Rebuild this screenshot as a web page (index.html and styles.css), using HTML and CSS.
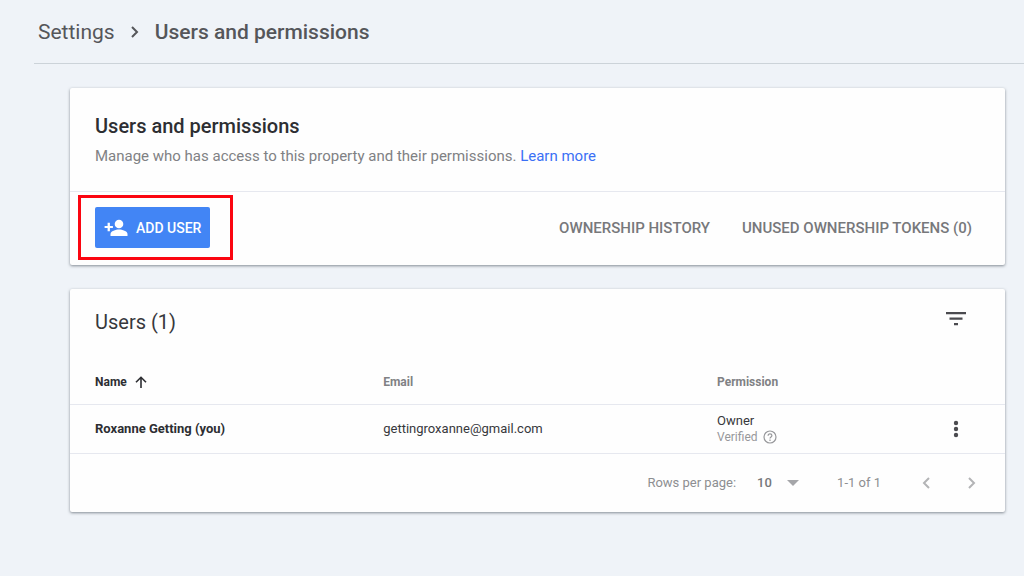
FILE: index.html
```html
<!DOCTYPE html>
<html lang="en">
<head>
    <meta charset="UTF-8">
    <meta name="viewport" content="width=device-width, initial-scale=1.0">
    <title>Users and permissions</title>
    <link rel="stylesheet" href="styles.css">
</head>
<body>
    <header class="topbar">
        <nav class="breadcrumb" aria-label="Breadcrumb">
            <a href="#">Settings</a>
            <svg class="crumb-arrow" viewBox="0 0 10 14" width="10" height="14"><path d="M2 2l5 5-5 5" fill="none" stroke="currentColor" stroke-width="2"/></svg>
            <span class="current">Users and permissions</span>
        </nav>
    </header>

    <main>
        <section class="card">
            <div class="intro">
                <h1>Users and permissions</h1>
                <p>Manage who has access to this property and their permissions. <a href="#">Learn more</a></p>
            </div>
            <div class="actions">
                <div class="highlight">
                    <button type="button" class="add-user">
                        <svg viewBox="0 0 24 18" width="24" height="18" fill="currentColor">
                            <circle cx="15" cy="5" r="4.3"/>
                            <path d="M15 10.5c-3.2 0-8.5 1.5-8.5 4.6V17h17v-1.900c0-3.100-5.300-4.600-8.500-4.600z"/>
                            <path d="M3.600 3.800h2.300v3.100h3v2.200h-3v3.100h-2.300v-3.100h-3v-2.200h3z"/>
                        </svg>
                        ADD USER
                    </button>
                </div>
                <div class="links">
                    <button type="button" class="text-button">OWNERSHIP HISTORY</button>
                    <button type="button" class="text-button">UNUSED OWNERSHIP TOKENS (0)</button>
                </div>
            </div>
        </section>

        <section class="card">
            <div class="list-header">
                <h2>Users (1)</h2>
                <button type="button" class="icon-button dark filter" aria-label="Filter">
                    <svg viewBox="0 0 20 14" width="20" height="14" fill="currentColor"><path d="M0 0h20v2.300H0zM3.500 5.500h13v2.300h-13zM8 11h4v2.300H8z"/></svg>
                </button>
            </div>
            <table>
                <thead>
                    <tr>
                        <th class="name">Name
                            <svg class="sort" viewBox="0 0 12 12" width="12" height="12"><path d="M6 12V1.500M1 6.300l5-5 5 5" fill="none" stroke="currentColor" stroke-width="1.600"/></svg>
                        </th>
                        <th class="email">Email</th>
                        <th class="permission">Permission</th>
                        <th class="menu"></th>
                    </tr>
                </thead>
                <tbody>
                    <tr>
                        <td class="name">Roxanne Getting (you)</td>
                        <td class="email">gettingroxanne@gmail.com</td>
                        <td class="permission">
                            <div>Owner</div>
                            <div class="verified">Verified
                                <svg viewBox="0 0 14 14" width="14" height="14" fill="none" stroke="currentColor" stroke-width="1.200">
                                    <circle cx="7" cy="7" r="6"/>
                                    <path d="M5.100 5.700c0-1.100.8-1.900 1.900-1.900s1.900.8 1.900 1.800c0 1.300-1.900 1.500-1.900 3M7 9.600v1.300"/>
                                </svg>
                            </div>
                        </td>
                        <td class="menu">
                            <button type="button" class="icon-button dark" aria-label="More options">
                                <svg viewBox="0 0 20 18" width="20" height="18" fill="currentColor"><circle cx="10" cy="3" r="2.200"/><circle cx="10" cy="9" r="2.200"/><circle cx="10" cy="15" r="2.200"/></svg>
                            </button>
                        </td>
                    </tr>
                </tbody>
            </table>
            <div class="pager">
                <label for="rows">Rows per page:</label>
                <div class="select-wrap">
                    <select id="rows">
                        <option>10</option>
                        <option>25</option>
                        <option>50</option>
                    </select>
                    <svg viewBox="0 0 12 6" width="12" height="6" fill="currentColor"><path d="M0 0h12L6 6z"/></svg>
                </div>
                <span class="range">1-1 of 1</span>
                <button type="button" class="icon-button" aria-label="Previous page">
                    <svg viewBox="0 0 10 14" width="10" height="14"><path d="M8 2L3 7l5 5" fill="none" stroke="currentColor" stroke-width="2"/></svg>
                </button>
                <button type="button" class="icon-button next" aria-label="Next page">
                    <svg viewBox="0 0 10 14" width="10" height="14"><path d="M2 2l5 5-5 5" fill="none" stroke="currentColor" stroke-width="2"/></svg>
                </button>
            </div>
        </section>
    </main>
</body>
</html>
```
FILE: styles.css
```css
* {
    box-sizing: border-box;
}
body {
    margin: 0;
    min-height: 100vh;
    background-color: #eff3f8;
    color: #37383c;
    font-family: Roboto, Arial, sans-serif;
    font-size: 14px;
}
button, select {
    font-family: inherit;
    border: none;
    background: none;
    padding: 0;
    cursor: pointer;
}
a {
    text-decoration: none;
}
svg {
    flex: none;
}
.topbar {
    margin-left: 34px;
    height: 64px;
    border-bottom: 1px solid #ccd3d9;
}
.breadcrumb {
    display: flex;
    align-items: center;
    gap: 15px;
    height: 64px;
    padding-left: 4px;
    color: #55565a;
    font-size: 21px;
}
.breadcrumb a {
    color: inherit;
}
.breadcrumb .current {
    font-weight: 500;
}
main {
    display: flex;
    flex-direction: column;
    gap: 24px;
    padding: 24px 19px 24px 70px;
}
.card {
    background-color: #fefefe;
    border-radius: 2px;
    box-shadow: 0 1px 3px rgba(60, 70, 80, 0.6);
}
.intro {
    padding: 24px 25px 23px;
    border-bottom: 1px solid #e6e8ef;
}
h1, h2, p {
    margin: 0;
}
h1 {
    font-size: 20px;
    font-weight: 500;
    line-height: 28px;
    color: #2d2e32;
}
.intro p {
    margin-top: 4px;
    font-size: 15px;
    line-height: 24px;
    color: #808184;
}
.intro a {
    color: #3a70f5;
}
.actions {
    display: flex;
    justify-content: space-between;
    align-items: center;
    height: 73px;
    padding: 0 33px 2px 8px;
}
.highlight {
    padding: 9px 20px 9px 14px;
    border: 3px solid #fb0510;
}
.add-user {
    display: flex;
    align-items: center;
    gap: 8px;
    height: 41px;
    padding: 0 9px;
    border-radius: 2px;
    background-color: #4285f5;
    color: white;
    font-size: 14px;
    font-weight: 500;
}
.links {
    display: flex;
    gap: 32px;
}
.text-button {
    color: #77787b;
    font-size: 15px;
    font-weight: 500;
}
.list-header {
    display: flex;
    justify-content: space-between;
    align-items: center;
    height: 66px;
    padding: 0 39px 0 25px;
}
h2 {
    font-size: 20px;
    font-weight: 400;
}
.icon-button {
    display: inline-flex;
    color: #b3b4b6;
}
.icon-button.dark {
    color: #4b4b4f;
}
.filter {
    padding-bottom: 6px;
}
table {
    width: 100%;
    table-layout: fixed;
    border-collapse: collapse;
    font-size: 13px;
}
th, td {
    padding: 0;
    text-align: left;
    border-bottom: 1px solid #e6e8ef;
}
th {
    height: 49px;
    padding-top: 6px;
    font-size: 12px;
    font-weight: 700;
    color: #808184;
}
td {
    height: 49px;
}
th.name, td.name {
    padding-left: 25px;
    font-weight: 700;
    color: #2d2e32;
}
.name {
    width: 33.5%;
}
.email {
    width: 35.7%;
}
.menu {
    width: 63px;
    padding-right: 39px;
    text-align: right;
}
.menu .icon-button {
    vertical-align: middle;
}
.sort {
    margin-left: 5px;
    vertical-align: -2px;
}
.permission {
    line-height: 16px;
}
.verified {
    display: flex;
    align-items: center;
    gap: 5px;
    font-size: 12px;
    color: #97989b;
}
.pager {
    display: flex;
    justify-content: flex-end;
    align-items: center;
    height: 58px;
    padding-right: 28px;
    font-size: 13px;
    color: #8d8e91;
}
.select-wrap {
    position: relative;
    display: flex;
    align-items: center;
    margin: 0 38px 0 21px;
}
select {
    appearance: none;
    width: 42px;
    color: #77787b;
    font-size: 13px;
    font-weight: 500;
}
.select-wrap svg {
    position: absolute;
    right: 0;
    color: #a5a6a9;
    pointer-events: none;
}
.range {
    margin-right: 40px;
}
.next {
    margin-left: 36px;
}
```
